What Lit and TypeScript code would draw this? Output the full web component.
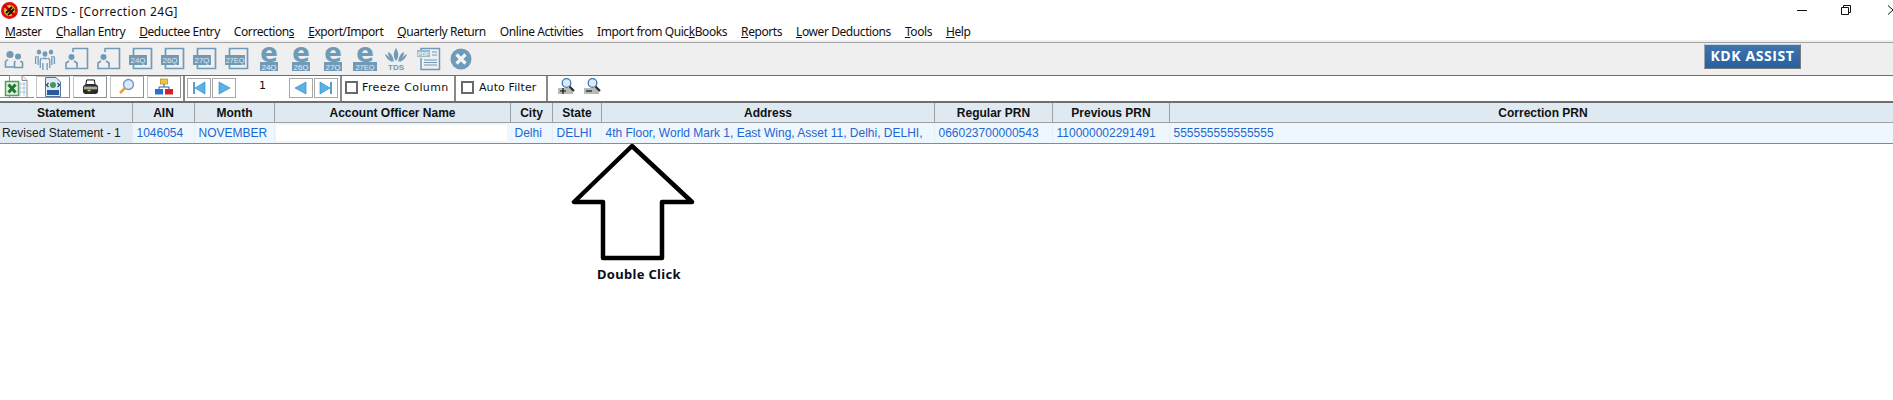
import { LitElement, html, svg, css } from 'lit';
import { customElement } from 'lit/decorators.js';

const BLUE = '#6f9ab8';

const menus: [string, number][] = [
  ['Master', 0],
  ['Challan Entry', 0],
  ['Deductee Entry', 0],
  ['Corrections', 10],
  ['Export/Import', 0],
  ['Quarterly Return', 0],
  ['Online Activities', -1],
  ['Import from QuickBooks', 16],
  ['Reports', 0],
  ['Lower Deductions', 0],
  ['Tools', 0],
  ['Help', 0],
];

// last column runs on past the right edge of the window
const columns = [
  ['Statement', 133],
  ['AIN', 62],
  ['Month', 80],
  ['Account Officer Name', 236],
  ['City', 42],
  ['State', 49],
  ['Address', 333],
  ['Regular PRN', 118],
  ['Previous PRN', 117],
  ['Correction PRN', 746],
] as const;

const row = [
  'Revised Statement - 1',
  '1046054',
  'NOVEMBER',
  '',
  'Delhi',
  'DELHI',
  '4th Floor, World Mark 1, East Wing, Asset 11, Delhi, DELHI,',
  '066023700000543',
  '110000002291491',
  '555555555555555',
];

const iconPair = () => html`<svg width="24" height="24" viewBox="0 0 24 24">
  <circle cx="9" cy="7.500" r="3.600" fill="${BLUE}"></circle>
  <circle cx="17" cy="9.500" r="3" fill="${BLUE}"></circle>
  <path
    d="M7 12.500 L4.500 14.500 V20 H13 M14.500 14 L13.500 15 V20.500 H21.500 V15.500 L19.500 14"
    fill="none"
    stroke="${BLUE}"
    stroke-width="1.600"
  ></path>
</svg>`;

const iconGroup = () => html`<svg width="24" height="24" viewBox="-2 0 28 24" preserveAspectRatio="none">
  <circle cx="5" cy="5" r="2.600" fill="${BLUE}"></circle>
  <circle cx="12" cy="7" r="2.800" fill="${BLUE}"></circle>
  <circle cx="19" cy="5" r="2.600" fill="${BLUE}"></circle>
  <path
    d="M2 9 L1 11 V17 M8 11 L6.500 13 V21 M9.500 16 V23 M14.500 16 V23 M16 11 L17.500 13 V21 M22 9 L23 11 V17 M4 9 V18 M20 9 V18 M9 11.500 H15"
    fill="none"
    stroke="${BLUE}"
    stroke-width="1.500"
  ></path>
</svg>`;

const iconPersonBox = () => html`<svg width="24" height="24" viewBox="0 0 24 24">
  <path d="M8 1 V5 M8 1.500 H22.500 V21.500 H13" fill="none" stroke="${BLUE}" stroke-width="1.600"></path>
  <circle cx="6.500" cy="10" r="3" fill="${BLUE}"></circle>
  <path d="M4 14 L1 16 V21.500 H12 V16 L9 14" fill="none" stroke="${BLUE}" stroke-width="1.600"></path>
</svg>`;

const iconForm = (label: string) => {
  const wide = label.length > 3;
  return html`<svg width="24" height="24" viewBox="0 0 24 24">
    <path d="M4.500 8 V1.500 H22.500 V21.500 H4.500 V18" fill="none" stroke="${BLUE}" stroke-width="1.700"></path>
    <rect x="0" y="8" width="${wide ? 20 : 18}" height="10" fill="${BLUE}"></rect>
    <text
      x="${wide ? 10 : 9}"
      y="16"
      text-anchor="middle"
      font-size="${wide ? 7.5 : 8}"
      fill="#dfe9f0"
      font-family="Liberation Sans, sans-serif"
    >${label}</text>
  </svg>`;
};

// svg is taller than the row so the big "e" keeps its whole line box
const iconE = (label: string) => {
  const wide = label.length > 3;
  return html`<svg class="tall" width="24" height="35" viewBox="0 -11 24 35">
    <text
      x="12"
      y="14.500"
      text-anchor="middle"
      font-size="26"
      font-weight="700"
      fill="${BLUE}"
      font-family="DejaVu Sans, sans-serif"
    >e</text>
    <rect x="${wide ? 0 : 3}" y="15" width="${wide ? 24 : 18}" height="9" fill="${BLUE}"></rect>
    <text
      x="12"
      y="22.500"
      text-anchor="middle"
      font-size="${wide ? 7.5 : 8}"
      fill="#e8eff4"
      font-family="Liberation Sans, sans-serif"
    >${label}</text>
  </svg>`;
};

const iconTds = () => html`<svg width="24" height="24" viewBox="0 0 24 24">
  <path
    d="M11 14 C8 10 8 6 11 1 C14 6 14 10 11 14 Z M9 15 C6 12 3 10 3 5 C6 6 8 9 9 15 Z M13 15 C16 12 19 10 19 5 C16 6 14 9 13 15 Z M8 15 C4 14 1 11 0 7 C2 8 6 11 8 15 Z M14 15 C18 14 21 11 22 7 C20 8 16 11 14 15 Z"
    fill="${BLUE}"
  ></path>
  <text
    x="11"
    y="23"
    text-anchor="middle"
    font-size="8"
    font-weight="700"
    fill="${BLUE}"
    font-family="Liberation Sans, sans-serif"
  >TDS</text>
</svg>`;

const iconPdf = () => html`<svg width="24" height="24" viewBox="0 0 24 24">
  <path d="M4 4 V1.500 H22.500 V22.500 H4 V11" fill="none" stroke="${BLUE}" stroke-width="1.500"></path>
  <rect x="0" y="3" width="13" height="7" fill="#9bb8cc"></rect>
  <text
    x="6.500"
    y="9"
    text-anchor="middle"
    font-size="6"
    font-weight="700"
    fill="#eef3f6"
    font-family="Liberation Sans, sans-serif"
  >PDF</text>
  <path d="M7 13 H20 M7 15.500 H20 M7 18 H20 M15 5 H20 M15 8 H20" stroke="${BLUE}" stroke-width="1"></path>
</svg>`;

const iconClose = () => html`<svg width="24" height="24" viewBox="0 0 24 24">
  <circle cx="12" cy="12" r="10.500" fill="${BLUE}"></circle>
  <path d="M7.500 7.500 L16.500 16.500 M16.500 7.500 L7.500 16.500" stroke="#f2f5f7" stroke-width="3.200"></path>
</svg>`;

const iconExcel = () => html`<svg width="28" height="23" viewBox="0 0 28 23">
  <path d="M9.500 .5 H22 L27 5.500 V22.500 H9.500 Z" fill="#fff" stroke="#8a8a8a"></path>
  <path d="M22 .5 V5.500 H27" fill="#eee" stroke="#8a8a8a"></path>
  <path d="M20 9 H26 M20 13 H26 M20 17 H26 M20 7 V21 M24 7 V21" stroke="#a9c7df"></path>
  <rect x="5.500" y="6.500" width="13" height="14" fill="#e4f0df" stroke="#55a05a" stroke-width="1.500"></rect>
  <path d="M8.500 9.500 L15.500 17.500 M15.500 9.500 L8.500 17.500" stroke="#1f7a35" stroke-width="3"></path>
</svg>`;

const iconWeb = () => html`<svg width="18" height="20" viewBox="0 0 18 20">
  <path d="M1.500 .5 H12 L16.500 5 V19.500 H1.500 Z" fill="#dfe9f6" stroke="#54739f"></path>
  <rect x="3" y="13" width="12" height="5" fill="#2a5b9d"></rect>
  <circle cx="9" cy="8" r="3" fill="#3d9a5a"></circle>
  <path d="M4.500 6 L2.500 8 L4.500 10 M13.500 6 L15.500 8 L13.500 10" fill="none" stroke="#244a86" stroke-width="1.300"></path>
</svg>`;

const iconPrinter = () => html`<svg width="17" height="17" viewBox="0 0 18 18">
  <path d="M5 1 H13 L14 6 H4 Z" fill="#fff" stroke="#000"></path>
  <path d="M1 8 L3 6 H16 L17 8 V14 L15 16 H3 L1 14 Z" fill="#2b2b2b"></path>
  <rect x="2" y="8" width="14" height="3" fill="#a9a9a9"></rect>
  <rect x="6" y="11.500" width="3" height="1.500" fill="#f2d63a"></rect>
</svg>`;

const iconSearch = () => html`<svg width="18" height="18" viewBox="0 0 18 18">
  <circle cx="10.500" cy="6.500" r="5" fill="#dbeafa" stroke="#6a97c5" stroke-width="1.300"></circle>
  <path d="M7 10 L2 15" stroke="#e5a335" stroke-width="2.500"></path>
</svg>`;

const iconZoom = (sign: string) => html`<svg width="17" height="17" viewBox="0 0 17 17">
  <rect x="0" y="10" width="15" height="6" fill="#b9b9b9"></rect>
  ${sign === '+'
    ? svg`<path d="M2 13 H8 M5 10 V16" stroke="#111" stroke-width="1.200"></path>`
    : svg`<path d="M2 13 H8" stroke="#111" stroke-width="1.200"></path>`}
  <circle cx="8.500" cy="5" r="4.300" fill="#dbeafa" stroke="#3f76ab" stroke-width="1.300"></circle>
  <path d="M11.500 8.500 L16 13" stroke="#2b2b2b" stroke-width="2.200"></path>
</svg>`;

const iconOrg = () => html`<svg width="18" height="18" viewBox="0 0 18 18">
  <rect x="5.500" y="1" width="7" height="5" fill="#f3c63a" stroke="#b48b18" stroke-width=".7"></rect>
  <path d="M9 6 V9 M4 11 V9 H14 V11" fill="none" stroke="#2b5fa8"></path>
  <rect x="0" y="11" width="8" height="5.500" fill="#2b6fd0"></rect>
  <rect x="10" y="11" width="8" height="5.500" fill="#d71f26"></rect>
</svg>`;

const NAV_FILL = '#55b4e8';
const NAV_LINE = '#2a7fb5';
const navFirst = () => html`<svg width="14" height="14" viewBox="0 0 14 14">
  <path d="M2 1 V13" stroke="${NAV_LINE}" stroke-width="1.500"></path>
  <path d="M13 1 V13 L3 7 Z" fill="${NAV_FILL}" stroke="${NAV_LINE}" stroke-width=".6"></path>
</svg>`;
const navNext = () => html`<svg width="14" height="14" viewBox="0 0 14 14">
  <path d="M2 1 V13 L13 7 Z" fill="${NAV_FILL}" stroke="${NAV_LINE}" stroke-width=".6"></path>
</svg>`;
const navPrev = () => html`<svg width="14" height="14" viewBox="0 0 14 14">
  <path d="M12 1 V13 L1 7 Z" fill="${NAV_FILL}" stroke="${NAV_LINE}" stroke-width=".6"></path>
</svg>`;
const navLast = () => html`<svg width="14" height="14" viewBox="0 0 14 14">
  <path d="M12 1 V13" stroke="${NAV_LINE}" stroke-width="1.500"></path>
  <path d="M1 1 V13 L11 7 Z" fill="${NAV_FILL}" stroke="${NAV_LINE}" stroke-width=".6"></path>
</svg>`;

@customElement('app-root')
export class AppRoot extends LitElement {
  static styles = css`
    :host {
      display: block;
      position: relative;
      height: 400px;
      overflow: hidden;
      background: #fff;
      color: #111;
    }

    .title-bar {
      display: flex;
      align-items: center;
      height: 20px;
      font: 12px 'Noto Sans', sans-serif;
    }

    .logo {
      margin: 0 3px 0 1px;
    }

    .title {
      flex: 1;
      padding-top: 2px;
      letter-spacing: 0.38px;
    }

    .win {
      display: flex;
      align-items: center;
      height: 20px;
      margin-top: -1px;
    }

    .win svg {
      display: block;
    }

    .win .min {
      margin-right: 34px;
    }

    .win .restore {
      margin-right: 37px;
    }

    .menu {
      display: flex;
      align-items: center;
      gap: 14px;
      box-sizing: border-box;
      height: 20px;
      padding: 2px 0 0 5px;
      font: 12px 'Noto Sans', sans-serif;
      letter-spacing: -0.42px;
    }

    .menu span {
      white-space: nowrap;
    }

    .band {
      height: 2px;
      background: #f0f0f0;
    }

    .toolbar {
      display: flex;
      align-items: flex-start;
      justify-content: space-between;
      box-sizing: border-box;
      height: 34px;
      padding: 0 92px 0 1px;
      background: #efefef;
      border-top: 1px solid #a0a0a0;
      border-bottom: 1px solid #6e6e6e;
    }

    .tools {
      display: flex;
      align-items: flex-start;
      gap: 8px;
      padding-top: 4px;
    }

    .tools svg {
      display: block;
    }

    .tools svg.tall {
      margin-top: -11px;
    }

    .kdk {
      box-sizing: border-box;
      width: 97px;
      height: 25px;
      margin-top: 1px;
      text-align: center;
      font: 700 14px/22px 'Open Sans', sans-serif;
      letter-spacing: 0.6px;
      color: #fff;
      background: linear-gradient(#3f75ad, #27609f);
      border: 1px solid;
      border-color: #c8d4e0 #7a7a7a #7a7a7a #9aa5b0;
    }

    .strip {
      display: flex;
      box-sizing: border-box;
      height: 27px;
      border-bottom: 2px solid #6e6e6e;
    }

    .group {
      display: flex;
      align-items: flex-start;
      box-sizing: border-box;
      border-right: 2px solid #8a8a8a;
    }

    .file-tools {
      gap: 3px;
      width: 185px;
    }

    .tool {
      display: flex;
      align-items: center;
      justify-content: center;
      box-sizing: border-box;
      width: 34px;
      height: 22px;
      background: #fff;
      border: 1px solid #c4c4c4;
      border-right-color: #8f8f8f;
      border-bottom-color: #8f8f8f;
    }

    .tool.wide {
      width: 34px;
      margin-right: -1px;
      justify-content: flex-start;
      border-top: 0;
      border-left: 0;
      border-right: 0;
    }

    .nav {
      width: 157px;
      padding: 2px 0 0 2px;
      gap: 1px;
    }

    .nav-btn {
      display: flex;
      align-items: center;
      justify-content: center;
      box-sizing: border-box;
      width: 24px;
      height: 20px;
      border: 1px solid #a8a8a8;
    }

    .page {
      width: 51px;
      text-align: center;
      font: 11px/15px 'DejaVu Sans', sans-serif;
    }

    .check {
      align-items: center;
      padding: 0 0 2px 3px;
      font: 11px 'DejaVu Sans', sans-serif;
      letter-spacing: 0.4px;
    }

    .freeze {
      gap: 4px;
      width: 114px;
    }

    .filter {
      gap: 5px;
      width: 92px;
      padding-left: 5px;
      letter-spacing: 0.1px;
    }

    .box {
      box-sizing: border-box;
      width: 13px;
      height: 13px;
      background: #fff;
      border: 2px solid #6a6a6a;
    }

    .zooms {
      display: flex;
      align-items: flex-start;
      gap: 9px;
      padding: 2px 0 0 10px;
    }

    .zooms svg {
      display: block;
    }

    .grid {
      display: flex;
      font: 12px/1 'Liberation Sans', sans-serif;
    }

    .grid div {
      flex: none;
    }

    .head {
      height: 19px;
      background: #dfe9f2;
      border-bottom: 1px solid #9f9f9f;
    }

    .head div {
      box-sizing: border-box;
      height: 19px;
      line-height: 20px;
      text-align: center;
      font-weight: 700;
      color: #111;
      border-right: 1px solid #a0a0a0;
    }

    .head div:last-child {
      border-right: 0;
    }

    .body {
      height: 20px;
      background: #eff7fe;
      border-bottom: 1px solid #8a8a8a;
    }

    .body div {
      box-sizing: border-box;
      height: 20px;
      padding-left: 3.5px;
      line-height: 20px;
      white-space: nowrap;
      overflow: hidden;
      color: #1e66d0;
      border-right: 1px solid #e6eef6;
    }

    .body div.first {
      padding-left: 2px;
      color: #222;
      background: #dfe9f2;
    }

    .body div.blank {
      padding: 0;
      border: 0;
    }

    .blank i {
      display: block;
      width: 231px;
      height: 16px;
      margin: 2px 0 0 1px;
      background: #fff;
    }

    .arrow {
      position: absolute;
      left: 570px;
      top: 142px;
    }

    .hint {
      position: absolute;
      left: 597px;
      top: 265px;
      font: 700 13px 'Noto Sans', sans-serif;
      letter-spacing: 0.3px;
      color: #0c0c1e;
    }
  `;

  renderMenu([label, at]: [string, number]) {
    if (at < 0) return html`<span>${label}</span>`;
    return html`<span>${label.slice(0, at)}<u>${label[at]}</u>${label.slice(at + 1)}</span>`;
  }

  render() {
    return html`
      <div class="title-bar">
        <svg class="logo" width="17" height="17" viewBox="0 0 17 17">
          <circle cx="8.500" cy="8.500" r="7" fill="#d9c23c" stroke="#e01010" stroke-width="3"></circle>
          <path d="M3 3 L14 14" stroke="#c00" stroke-width="2.500"></path>
          <path d="M5 11 L11 5 M7 13 L13 7" stroke="#111" stroke-width="1.800"></path>
        </svg>
        <span class="title">ZENTDS - [Correction 24G]</span>
        <div class="win">
          <svg class="min" width="10" height="10" viewBox="0 0 10 10"><path d="M0 5.500 H10" stroke="#111"></path></svg>
          <svg class="restore" width="10" height="10" viewBox="0 0 10 10">
            <path d="M.5 2.500 H7.500 V9.500 H.5 Z M2.500 2.500 V.5 H9.500 V7.500 H7.500" fill="none" stroke="#111"></path>
          </svg>
          <svg width="5" height="10" viewBox="0 0 5 10"><path d="M0 .5 L5 5 L0 9.500" fill="none" stroke="#111"></path></svg>
        </div>
      </div>
      <div class="menu">${menus.map((m) => this.renderMenu(m))}</div>
      <div class="band"></div>

      <div class="toolbar">
        <div class="tools">
          ${iconPair()}${iconGroup()}${iconPersonBox()}${iconPersonBox()}
          ${iconForm('24Q')}${iconForm('26Q')}${iconForm('27Q')}${iconForm('27EQ')}
          ${iconE('24Q')}${iconE('26Q')}${iconE('27Q')}${iconE('27EQ')}
          ${iconTds()}${iconPdf()}${iconClose()}
        </div>
        <div class="kdk">KDK ASSIST</div>
      </div>

      <div class="strip">
        <div class="group file-tools">
          <div class="tool wide">${iconExcel()}</div>
          <div class="tool">${iconWeb()}</div>
          <div class="tool">${iconPrinter()}</div>
          <div class="tool">${iconSearch()}</div>
          <div class="tool">${iconOrg()}</div>
        </div>
        <div class="group nav">
          <div class="nav-btn">${navFirst()}</div>
          <div class="nav-btn">${navNext()}</div>
          <div class="page">1</div>
          <div class="nav-btn">${navPrev()}</div>
          <div class="nav-btn">${navLast()}</div>
        </div>
        <div class="group check freeze"><span class="box"></span>Freeze Column</div>
        <div class="group check filter"><span class="box"></span>Auto Filter</div>
        <div class="zooms">${iconZoom('+')}${iconZoom('-')}</div>
      </div>

      <div class="grid head">
        ${columns.map(([name, w]) => html`<div style="width:${w}px">${name}</div>`)}
      </div>
      <div class="grid body">
        ${row.map((value, i) =>
          i === 3
            ? html`<div class="blank" style="width:${columns[i][1]}px"><i></i></div>`
            : html`<div class="${i === 0 ? 'first' : ''}" style="width:${columns[i][1]}px">${value}</div>`
        )}
      </div>

      <svg class="arrow" width="126" height="120" viewBox="0 0 126 120">
        <path
          d="M62 4 L4 60 H33 V116 H92 V60 H122 Z"
          fill="#fff"
          stroke="#000"
          stroke-width="4.500"
          stroke-linejoin="round"
        ></path>
      </svg>
      <div class="hint">Double Click</div>
    `;
  }
}
